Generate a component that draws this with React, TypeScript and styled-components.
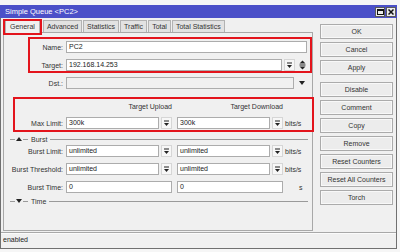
import React from 'react';
import styled, { createGlobalStyle } from 'styled-components';

const Global = createGlobalStyle`
  html, body {
    margin: 0;
    padding: 0;
    background: #f6f6f6;
  }
  body {
    font-family: "Liberation Sans", Arial, sans-serif;
    font-size: 7px;
    color: #333;
  }
`;

const Window = styled.div`
  margin-top: 5px;
  width: 397px;
  height: 244px;
  box-sizing: border-box;
  background: #f0f0f0;
  border: 1px solid #707070;
  border-top: none;
  display: flex;
  flex-direction: column;
`;

const TitleBar = styled.div`
  height: 13px;
  flex-shrink: 0;
  background: #4b50c8;
  color: #fff;
  font-size: 7.5px;
  display: flex;
  align-items: center;
  justify-content: space-between;
  padding: 0 1px 0 5px;
  margin: 0 -1px;
`;

const WinButtons = styled.div`
  display: flex;
  gap: 1px;
`;

const WinButton = styled.div`
  width: 10px;
  height: 10px;
  box-sizing: border-box;
  background: #ececec;
  border: 1px solid #5a5a5a;
  display: flex;
  align-items: center;
  justify-content: center;
`;

const Body = styled.div`
  flex: 1;
  display: flex;
  padding: 2px 0 1px 2px;
  min-height: 0;
`;

const LeftCol = styled.div`
  width: 310px;
  display: flex;
  flex-direction: column;
`;

const Tabs = styled.div`
  display: flex;
  gap: 1px;
  height: 12px;
  padding-left: 2px;
  position: relative;
  z-index: 1;
`;

const Tab = styled.div<{ $active?: boolean; $marked?: boolean }>`
  position: relative;
  height: ${p => (p.$active ? 13 : 12)}px;
  box-sizing: border-box;
  padding: 0 ${p => (p.$active ? 4 : 3)}px;
  margin-right: ${p => (p.$active ? 2 : 0)}px;
  line-height: 11px;
  border: 1px solid #b2b2b2;
  border-bottom: none;
  background: ${p => (p.$active ? '#f0f0f0' : '#e2e2e2')};
  color: #333;
  white-space: nowrap;

  ${p =>
    p.$marked &&
    `
    &::after {
      content: '';
      position: absolute;
      left: -3px;
      right: -3px;
      top: -2px;
      bottom: -2px;
      border: 2px solid #e3141c;
    }
  `}
`;

const Panel = styled.div`
  flex: 1;
  border: 1px solid #a8a8a8;
  display: flex;
  flex-direction: column;
`;

const Marked = styled.div<{ $left: number; $right: number; $top: number; $lw: number }>`
  --lw: ${p => p.$lw}px;
  margin: ${p => p.$top}px ${p => p.$right}px 0 ${p => p.$left}px;
  border: 2px solid #e3141c;
`;

const Row = styled.div<{ $mt?: number; $pr?: number }>`
  display: grid;
  grid-template-columns: var(--lw, 59px) 1fr;
  column-gap: 3px;
  align-items: center;
  height: 12px;
  margin-top: ${p => p.$mt ?? 0}px;
  padding-right: ${p => p.$pr ?? 0}px;
`;

const Label = styled.div`
  text-align: right;
  white-space: nowrap;
  color: #333;
`;

const Cells = styled.div`
  display: flex;
  align-items: center;
  height: 12px;
  min-width: 0;
`;

const Field = styled.div<{ $disabled?: boolean }>`
  flex: 1;
  min-width: 0;
  height: 12px;
  box-sizing: border-box;
  border: 1px solid #acacac;
  background: ${p => (p.$disabled ? '#f0f0f0' : '#fff')};
  padding-left: 2px;
  line-height: 10px;
  color: #222;
  white-space: nowrap;
  overflow: hidden;
`;

const DropBtn = styled.div`
  width: 11px;
  height: 12px;
  box-sizing: border-box;
  margin-left: 2px;
  border: 1px solid #d6d6d6;
  background: #f7f7f7;
  display: flex;
  align-items: center;
  justify-content: center;
  flex-shrink: 0;
`;

const Spin = styled.div`
  width: 10px;
  margin-left: 2px;
  display: flex;
  justify-content: center;
`;

const ArrowCell = styled.div`
  width: 18px;
  padding-left: 4px;
  box-sizing: border-box;
  display: flex;
  align-items: center;
`;

const Col = styled.div<{ $right?: boolean }>`
  width: 106px;
  flex-shrink: 0;
  display: flex;
  align-items: center;
  justify-content: ${p => (p.$right ? 'flex-end' : 'flex-start')};
  white-space: nowrap;

  & + & {
    margin-left: 5px;
  }
`;

const Unit = styled.div<{ $pad?: number }>`
  margin-left: ${p => p.$pad ?? 2}px;
  white-space: nowrap;
  color: #333;
`;

const Separator = styled.div<{ $mt: number }>`
  display: flex;
  align-items: center;
  height: 10px;
  margin: ${p => p.$mt}px 4px 0 6px;
  color: #333;
`;

const Dash = styled.div<{ $w?: number }>`
  height: 1px;
  width: ${p => p.$w ?? 5}px;
  background: #9a9a9a;
  flex: ${p => (p.$w ? '0 0 auto' : '1')};
`;

const SepText = styled.span`
  margin: 0 3px;
`;

const Buttons = styled.div`
  width: 73px;
  margin-left: 7px;
  padding-top: 1px;
  display: flex;
  flex-direction: column;
`;

const Button = styled.div<{ $mt?: number }>`
  height: 15px;
  box-sizing: border-box;
  margin-top: ${p => p.$mt ?? 3}px;
  border: 1px solid #ababab;
  background: #ececec;
  box-shadow: inset 0 0 0 1px #f8f8f8;
  display: flex;
  align-items: center;
  justify-content: center;
  color: #333;
  white-space: nowrap;
`;

const StatusBar = styled.div`
  height: 15px;
  flex-shrink: 0;
  border-top: 1px solid #a8a8a8;
  box-shadow: inset 0 1px 0 #fbfbfb;
  padding-left: 2px;
  line-height: 14px;
  color: #222;
`;

const DropIcon = () => (
  <svg width="7" height="7" viewBox="0 0 7 7">
    <rect x="1" y="0.5" width="5" height="1" fill="#222" />
    <path d="M1 3h5L3.5 6z" fill="#222" />
  </svg>
);

const SpinIcon = () => (
  <svg width="7" height="10" viewBox="0 0 7 10">
    <path d="M3.5 0.5L6.5 3.5h-6z" fill="#222" />
    <rect x="0.5" y="4.5" width="6" height="1" fill="#222" />
    <path d="M0.5 6.5h6L3.5 9.5z" fill="#222" />
  </svg>
);

const Tri = ({ up }: { up?: boolean }) => (
  <svg width="6" height="4" viewBox="0 0 6 4" style={{ margin: '0 1px' }}>
    <path d={up ? 'M0 4h6L3 0z' : 'M0 0h6L3 4z'} fill="#222" />
  </svg>
);

const Select = ({ value }: { value: string }) => (
  <>
    <Field>{value}</Field>
    <DropBtn>
      <DropIcon />
    </DropBtn>
  </>
);

const buttons: [string, number?][] = [
  ['OK'],
  ['Cancel'],
  ['Apply'],
  ['Disable', 7],
  ['Comment'],
  ['Copy'],
  ['Remove'],
  ['Reset Counters'],
  ['Reset All Counters'],
  ['Torch'],
];

const tabs = ['General', 'Advanced', 'Statistics', 'Traffic', 'Total', 'Total Statistics'];

export default function App() {
  return (
    <>
      <Global />
      <Window>
        <TitleBar>
          <span>{'Simple Queue <PC2>'}</span>
          <WinButtons>
            <WinButton>
              <svg width="7" height="6" viewBox="0 0 7 6">
                <rect x="0.5" y="0.5" width="6" height="5" fill="none" stroke="#111" />
                <rect x="0" y="0" width="7" height="2" fill="#111" />
              </svg>
            </WinButton>
            <WinButton>
              <svg width="6" height="6" viewBox="0 0 6 6">
                <path d="M0.5 0.5L5.5 5.5M5.5 0.5L0.5 5.5" stroke="#111" strokeWidth="1.5" />
              </svg>
            </WinButton>
          </WinButtons>
        </TitleBar>
        <Body>
          <LeftCol>
            <Tabs>
              {tabs.map((t, i) => (
                <Tab key={t} $active={i === 0} $marked={i === 0}>
                  {t}
                </Tab>
              ))}
            </Tabs>
            <Panel>
              <Marked $left={24} $right={0} $top={4} $lw={33}>
                <Row $mt={2} $pr={3}>
                  <Label>Name:</Label>
                  <Cells>
                    <Field>PC2</Field>
                  </Cells>
                </Row>
                <Row $mt={6} $pr={3}>
                  <Label>Target:</Label>
                  <Cells>
                    <Select value="192.168.14.253" />
                    <Spin>
                      <SpinIcon />
                    </Spin>
                  </Cells>
                </Row>
              </Marked>
              <Row $mt={4}>
                <Label>Dst.:</Label>
                <Cells>
                  <Field $disabled />
                  <ArrowCell>
                    <Tri />
                  </ArrowCell>
                </Cells>
              </Row>
              <Marked $left={9} $right={-2} $top={8} $lw={48}>
                <Row $mt={1}>
                  <Label />
                  <Cells>
                    <Col $right>Target Upload</Col>
                    <Col $right>Target Download</Col>
                  </Cells>
                </Row>
                <Row $mt={5} style={{ marginBottom: 1 }}>
                  <Label>Max Limit:</Label>
                  <Cells>
                    <Col>
                      <Select value="300k" />
                    </Col>
                    <Col>
                      <Select value="300k" />
                    </Col>
                    <Unit>bits/s</Unit>
                  </Cells>
                </Row>
              </Marked>
              <Separator $mt={2}>
                <Dash $w={5} />
                <Tri up />
                <Dash $w={5} />
                <SepText>Burst</SepText>
                <Dash />
              </Separator>
              <Row $mt={1}>
                <Label>Burst Limit:</Label>
                <Cells>
                  <Col>
                    <Select value="unlimited" />
                  </Col>
                  <Col>
                    <Select value="unlimited" />
                  </Col>
                  <Unit>bits/s</Unit>
                </Cells>
              </Row>
              <Row $mt={6}>
                <Label>Burst Threshold:</Label>
                <Cells>
                  <Col>
                    <Select value="unlimited" />
                  </Col>
                  <Col>
                    <Select value="unlimited" />
                  </Col>
                  <Unit>bits/s</Unit>
                </Cells>
              </Row>
              <Row $mt={6}>
                <Label>Burst Time:</Label>
                <Cells>
                  <Col>
                    <Field>0</Field>
                  </Col>
                  <Col>
                    <Field>0</Field>
                  </Col>
                  <Unit $pad={16}>s</Unit>
                </Cells>
              </Row>
              <Separator $mt={3}>
                <Dash $w={5} />
                <Tri />
                <Dash $w={5} />
                <SepText>Time</SepText>
                <Dash />
              </Separator>
            </Panel>
          </LeftCol>
          <Buttons>
            {buttons.map(([label, mt]) => (
              <Button key={label} $mt={mt}>
                {label}
              </Button>
            ))}
          </Buttons>
        </Body>
        <StatusBar>enabled</StatusBar>
      </Window>
    </>
  );
}
